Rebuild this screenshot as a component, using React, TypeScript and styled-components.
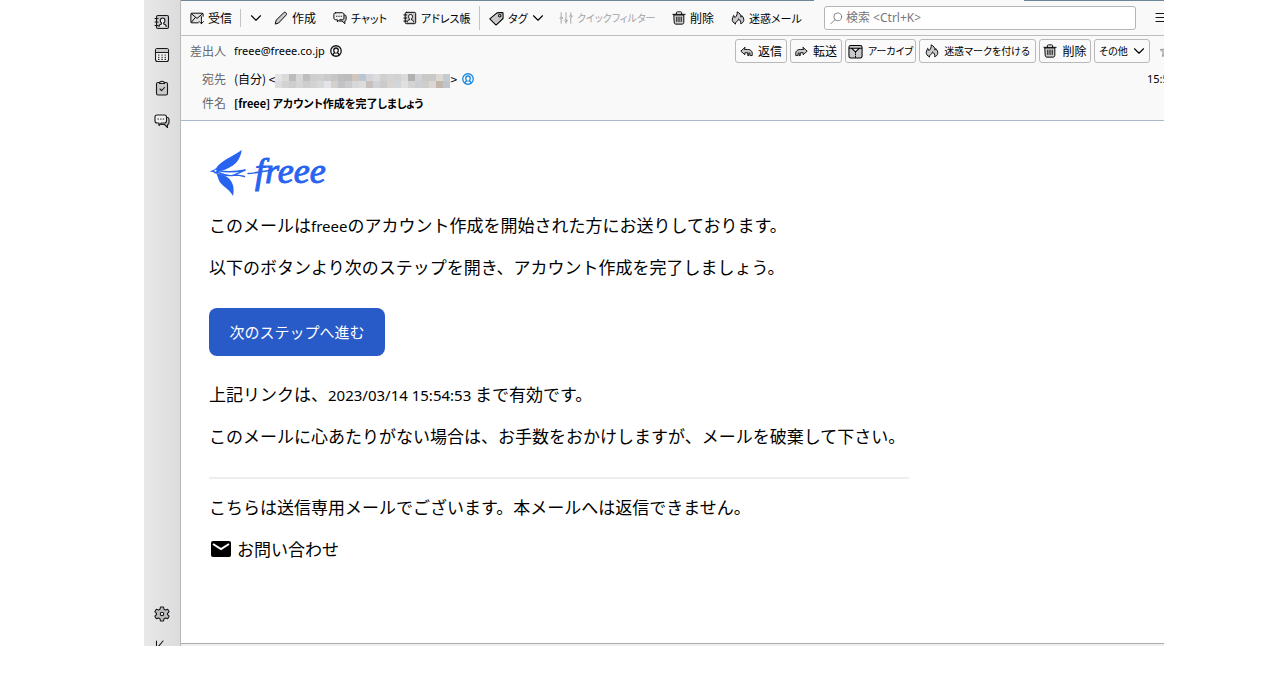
import React from 'react';
import styled, { createGlobalStyle } from 'styled-components';

const Global = createGlobalStyle`
  *, *::before, *::after { box-sizing: border-box; }
  body { margin: 0; background: #fff; color: #000; font-family: "Noto Sans CJK JP", sans-serif; }
  button, input { font: inherit; color: inherit; }
  svg { display: block; flex: none; }
`;

const Page = styled.div`
  height: 100vh;
  padding: 0 116px 35px 144px;
`;

const MailWindow = styled.div`
  display: flex;
  height: 100%;
  overflow: hidden;
`;

const Spaces = styled.nav`
  flex: none;
  width: 37px;
  padding: 14px 0 0;
  display: flex;
  flex-direction: column;
  align-items: center;
  gap: 17px;
  overflow: hidden;
  background: linear-gradient(to right, #e8e8e8, #dcdcdc);
  border-right: 1px solid #b8b8b8;
`;

const SpaceButton = styled.button`
  flex: none;
  width: 16px;
  height: 16px;
  padding: 0;
  border: 0;
  background: none;
  color: #18181b;
`;

const Spacer = styled.div`
  flex: 1;
`;

const LowerSpaces = styled.div`
  flex: none;
  height: 40px;
  display: flex;
  flex-direction: column;
  gap: 17px;
`;

const Main = styled.main`
  flex: 1;
  min-width: 0;
  display: flex;
  flex-direction: column;
  overflow: hidden;
`;

const TabEdge = styled.div`
  flex: none;
  display: flex;
  height: 1px;
  background: #6c8798;
`;

const ActiveTab = styled.div`
  width: 210px;
  margin-left: auto;
  margin-right: 140px;
  background: #f9f9fa;
`;

const Toolbar = styled.div`
  flex: none;
  height: 35px;
  display: flex;
  align-items: center;
  background: #f9f9fa;
  border-bottom: 1px solid #bdbdbd;
  font-size: 12px;
  line-height: 16px;
  font-feature-settings: "palt";
`;

const ToolButton = styled.button<{ $width: number }>`
  flex: none;
  width: ${p => p.$width}px;
  height: 24px;
  padding: 0 0 0 9px;
  display: flex;
  align-items: center;
  gap: 4px;
  border: 0;
  background: none;
  white-space: nowrap;
  color: #000;
  &:disabled { color: #a3a3a6; }
`;

const Divider = styled.span<{ $tall?: boolean }>`
  flex: none;
  width: 1px;
  height: ${p => (p.$tall ? 24 : 18)}px;
  background: #c4c4c6;
`;

const Kana = styled.span<{ $small?: boolean }>`
  font-size: ${p => (p.$small ? 10 : 11)}px;
`;

const SearchBox = styled.label`
  flex: 1;
  min-width: 0;
  height: 24px;
  margin: 0 19px 0 14px;
  padding: 0 5px;
  display: flex;
  align-items: center;
  gap: 3px;
  background: #fff;
  border: 1px solid #b4b4b8;
  border-radius: 3px;
  color: #77777c;
`;

const SearchInput = styled.input`
  flex: 1;
  min-width: 0;
  padding: 0;
  border: 0;
  outline: 0;
  background: none;
  font-family: "Noto Sans", "Noto Sans CJK JP", sans-serif;
  font-size: 12px;
  &::placeholder { color: #77777c; opacity: 1; }
`;

const EdgeButton = styled.button<{ $width: number }>`
  flex: none;
  width: ${p => p.$width}px;
  height: 16px;
  padding: 0;
  border: 0;
  background: none;
  color: #18181b;
  overflow: hidden;
`;

const MessageHeader = styled.header`
  flex: none;
  padding-bottom: 5px;
  background: #f9f9fa;
  border-bottom: 1px solid #a9b9cb;
  font-size: 12px;
  line-height: 16px;
  font-feature-settings: "palt";
`;

const HeaderRow = styled.div<{ $first?: boolean }>`
  height: ${p => (p.$first ? 30 : 24)}px;
  margin-bottom: ${p => (p.$first ? 1 : 0)}px;
  display: flex;
  align-items: center;
  white-space: nowrap;
`;

const FieldName = styled.span`
  flex: none;
  width: 45px;
  margin-right: 8px;
  text-align: right;
  color: #66666b;
`;

const FieldValue = styled.span`
  display: flex;
  align-items: center;
  gap: 5px;
`;

const Latin = styled.span`
  font-family: "Noto Sans", sans-serif;
  font-size: 11px;
`;

const Subject = styled.h1`
  margin: 0;
  font-size: 11px;
  line-height: 16px;
  font-weight: 700;
`;

const Recipient = styled.span`
  display: flex;
  align-items: center;
`;

const Redacted = styled.span`
  display: grid;
  grid-template-columns: repeat(25, 7px);
  grid-auto-rows: 7px;
  margin-top: 3px;
`;

const Block = styled.i<{ $tone: string }>`
  background: ${p => p.$tone};
`;

const Actions = styled.div`
  margin-left: auto;
  display: flex;
  align-items: center;
  gap: 3px;
`;

const ActionButton = styled.button<{ $width: number }>`
  flex: none;
  width: ${p => p.$width}px;
  height: 24px;
  padding: 0;
  display: flex;
  align-items: center;
  justify-content: center;
  gap: 5px;
  border: 1px solid #b9b9bc;
  border-radius: 3px;
  background: #fafafa;
  white-space: nowrap;
`;

const StarSlot = styled.div`
  display: flex;
  margin-left: 6px;
`;

const Time = styled.time`
  width: 17px;
  margin-left: auto;
  overflow: hidden;
  font-family: "Noto Sans", sans-serif;
  font-size: 11px;
`;

const Message = styled.article`
  flex: 1;
  min-height: 0;
  padding: 28px;
  overflow: hidden;
  background: #fff;
  font-size: 17px;
  line-height: 26px;
`;

const Logo = styled.div`
  display: flex;
  height: 48px;
  margin-bottom: 15px;
  color: #2864f0;
`;

const Wordmark = styled.span`
  margin-left: -18px;
  font-family: "Liberation Serif", serif;
  font-style: italic;
  font-size: 36px;
  line-height: 44px;
  -webkit-text-stroke: 1px currentColor;
`;

const Paragraph = styled.p`
  margin: 0 0 16px;
`;

const Text = styled.span`
  font-family: "Noto Sans", sans-serif;
  font-size: 15px;
  line-height: 16px;
`;

const NextStep = styled.a`
  display: flex;
  align-items: center;
  justify-content: center;
  width: 176px;
  height: 48px;
  margin: 28px 0 25px;
  border-radius: 8px;
  background: #285ac8;
  color: #fff;
  font-size: 15px;
  text-decoration: none;
`;

const Rule = styled.hr`
  max-width: 700px;
  height: 2px;
  margin: 28px 0 15px;
  border: 0;
  background: #eeeeee;
`;

const Contact = styled.a`
  display: flex;
  align-items: center;
  gap: 4px;
  color: inherit;
  text-decoration: none;
`;

const StatusEdge = styled.footer`
  flex: none;
  height: 3px;
  border-top: 1px solid #ababab;
  background: #f0f0f0;
`;

type IconProps = { size?: number; children: React.ReactNode };
const Icon = ({ size = 14, children }: IconProps) => (
  <svg width={size} height={size} viewBox="0 0 16 16" fill="none" stroke="currentColor"
    strokeWidth="1.1" strokeLinecap="round" strokeLinejoin="round" aria-hidden="true">{children}</svg>
);

const fill = '#c9c9cb';
const AddressIcon = ({ size }: { size?: number }) => (
  <Icon size={size}>
    <rect x="2.5" y="1.5" width="12" height="13" rx="1.5" fill={fill} />
    <path d="M1 4.5h3M1 8h3M1 11.5h3M5 12.5c0-1.600 1-2.200 2.500-2.500v-1c-1-.8-1.200-1.800-1.200-2.600C6.300 4.800 7.200 4 8.600 4s2.300.8 2.300 2.400c0 .8-.3 1.800-1.200 2.600v1c1.500.3 2.500.9 2.500 2.500" fill="#ededee" />
  </Icon>
);
const CalendarIcon = () => (
  <Icon size={16}>
    <rect x="1.5" y="1.5" width="13" height="13" rx="2" fill="#efefef" />
    <path d="M2 5.500V3.500c0-1 .5-1.500 1.500-1.500h9c1 0 1.500.5 1.500 1.500v2z" fill={fill} stroke="none" />
    <path d="M2 5.500h12M4.500 8h.5M7.800 8h.5M11 8h.5M4.500 10.200h.5M7.800 10.200h.5M11 10.200h.5M4.500 12.400h.5M7.800 12.400h.5M11 12.400h.5" />
  </Icon>
);
const TaskIcon = () => (
  <Icon size={16}>
    <rect x="2.500" y="2.500" width="11" height="12.500" rx="1.500" fill={fill} />
    <path d="M5.500 3.500c0-3 5-3 5 0z" fill="#eee" />
    <path d="M6 9l1.600 1.700L10.500 7.500" />
  </Icon>
);
const ChatIcon = ({ size }: { size?: number }) => (
  <Icon size={size}>
    <path d="M12 4.500h1c1.200 0 2 .8 2 2v3c0 1.200-.8 2-1.500 2v3l-3-3H7.500" fill={fill} />
    <path d="M3 2h7.500c1.200 0 2 .8 2 2v4c0 1.200-.8 2-2 2H7.500l-2.500 2.500V10H3c-1.200 0-2-.8-2-2V4c0-1.200.8-2 2-2z" fill="#f0f0f0" />
    <path d="M4 6h.5M6.600 6h.5M9.200 6h.5" />
  </Icon>
);
const GearIcon = () => (
  <Icon size={16}>
    <path d="M6.500 1h3l.5 2.200 1.500.9 2.200-.8 1.400 2.500L13.500 7.300v1.400l1.600 1.500-1.400 2.500-2.200-.8-1.500.9-.5 2.200h-3L6 12.800l-1.500-.9-2.200.8-1.400-2.500 1.600-1.500V7.300L.9 5.800l1.400-2.500 2.200.8L6 3.200z" fill="#bcbcbe" />
    <circle cx="8" cy="8" r="1.700" fill="#eee" />
  </Icon>
);
const CollapseIcon = () => <Icon size={16}><path d="M2.500 2v12M9 2L4 8l5 6" /></Icon>;
const InboxIcon = () => (
  <Icon>
    <path d="M9.500 13.500H2c-.6 0-1-.4-1-1v-9c0-.6.4-1 1-1h12c.6 0 1 .4 1 1V6" fill="#e4e4e6" />
    <path d="M1.500 3L8 8.500 14.500 3M1.500 13L6 7.500M13 6.500v8M10.500 12L13 14.500l2.500-2.500" />
  </Icon>
);
const PencilIcon = () => (
  <Icon><path d="M1.500 14.500l1-4L11 2c1-1 2.200-.6 2.700 0 .7.700.9 1.900 0 2.800L5.500 13.500z" fill={fill} /></Icon>
);
const TagIcon = () => (
  <Icon size={15}>
    <path d="M8.500 2L14 1.500c.7 0 1 .4 1 1V8l-7.500 7L.8 8.500z" fill={fill} />
    <circle cx="11.500" cy="5" r="1.300" fill="#fff" />
  </Icon>
);
const FilterIcon = () => (
  <Icon><path d="M2.500 2v4M2.500 10v4M8 2v7M8 13v1M13.500 2v2M13.500 8v6" /><circle cx="2.500" cy="8" r="1.300" /><circle cx="8" cy="11" r="1.300" /><circle cx="13.500" cy="6" r="1.300" /></Icon>
);
const TrashIcon = () => (
  <Icon>
    <path d="M2.500 4.500h11v8.500c0 1.200-.8 2-2 2h-7c-1.200 0-2-.8-2-2z" fill={fill} />
    <path d="M1 3.800h14M5 3.500V2c0-.6.400-1 1-1h4c.6 0 1 .4 1 1v1.500M5.500 7v5M8 7v5M10.500 7v5" />
  </Icon>
);
const FireIcon = () => (
  <Icon>
    <path d="M5 14.500C2.500 13.500 1 11.500 1.500 9 1.800 7.500 2.700 6.500 3 5c1 .6 1.400 1.400 1.500 2.500C6.500 6 7.500 3.500 7 1c3 1.200 4.500 3.500 4.300 6 .6-.4.900-1.100 1-1.800C14 7 15 9 14.500 11c-.4 1.800-1.700 3-3.500 3.500.7-2-.3-4-2.500-5.500 0 1.500-.5 2-1.500 2.600-1.200.8-1.800 1.600-2 2.900z" fill={fill} />
  </Icon>
);
const ReplyIcon = ({ flip }: { flip?: boolean }) => (
  <Icon size={13}>
    <path transform={flip ? 'matrix(-1 0 0 1 16 0)' : undefined}
      d="M6 3L1 7.500 6 12V9.500h3.500V13h1.500V9.500c1 0 1.300.8 1.500 3.500H15c.7-4.500-1-7.500-5.500-7.500H6z" fill={fill} />
  </Icon>
);
const ArchiveIcon = () => (
  <Icon size={15}>
    <rect x="1" y="1.500" width="14" height="13.500" rx="2" fill={fill} />
    <path d="M1.500 4.500h13L8 8.500z" fill="#f0f0f0" stroke="none" />
    <path d="M1.500 4.500h13M4 4.800l4 3.500 4-3.500M8 8.500v1M8 11v.5M8 13v1" />
  </Icon>
);
const Chevron = () => <Icon size={12}><path d="M2 5l6 6 6-6" strokeWidth="1.500" /></Icon>;
const SearchIcon = () => <Icon size={13}><circle cx="9.500" cy="6" r="4.800" /><path d="M6 9.500L1 14.500" /></Icon>;
const PersonIcon = ({ color }: { color: string }) => (
  <svg width="12" height="12" viewBox="0 0 16 16" fill="none" stroke={color} strokeWidth="1.700" aria-hidden="true">
    <circle cx="8" cy="8" r="7" />
    <path d="M4 13.500c0-2 1-2.800 2.500-3-1-.8-1.500-1.900-1.500-3.200C5 5.200 6.200 4 8 4s3 1.200 3 3.300c0 1.300-.5 2.400-1.500 3.200 1.500.2 2.500 1 2.500 3" />
  </svg>
);

const tones = [
  '#e4e4e5', '#dadadb', '#bcbcbd', '#d6d6d7', '#bebec0', '#cecece', '#d0d0d0', '#cbcbcc', '#c6c6c6', '#bfbebe', '#bdbcbc', '#cfc6c0', '#b9c6d6',
  '#d3d5d8', '#dcdcdc', '#d0d0d0', '#d4d4d4', '#d2d2d2', '#dadada', '#b3b0b0', '#d0d2d6', '#c8c8c6', '#c9c9c8', '#dcd9d3', '#c6cbd2',
  '#dcdcdd', '#d2d2d3', '#cdcdce', '#d5d5d6', '#cdcdcf', '#d2d2d3', '#d8d8d9', '#e4e4e6', '#d3cfcc', '#c0c2c6', '#cbcbcd', '#d6d7d9', '#dcdcdd',
  '#c6c0be', '#d0d2d6', '#cbcbcc', '#d8d4d0', '#d2d6da', '#e0e0e0', '#d4d4d5', '#ccced1', '#cdcdcc', '#dbd6cf', '#c3b7ab', '#c0c4cc',
];

export default function App() {
  return (
    <Page>
      <Global />
      <MailWindow>
        <Spaces aria-label="スペース">
          <SpaceButton aria-label="アドレス帳"><AddressIcon size={16} /></SpaceButton>
          <SpaceButton aria-label="カレンダー"><CalendarIcon /></SpaceButton>
          <SpaceButton aria-label="ToDo"><TaskIcon /></SpaceButton>
          <SpaceButton aria-label="チャット"><ChatIcon size={16} /></SpaceButton>
          <Spacer />
          <LowerSpaces>
            <SpaceButton aria-label="設定"><GearIcon /></SpaceButton>
            <SpaceButton aria-label="折りたたむ"><CollapseIcon /></SpaceButton>
          </LowerSpaces>
        </Spaces>
        <Main>
          <TabEdge><ActiveTab /></TabEdge>
          <Toolbar role="toolbar">
            <ToolButton $width={59}><InboxIcon />受信</ToolButton>
            <Divider />
            <ToolButton $width={24} aria-label="受信メニュー"><Chevron /></ToolButton>
            <ToolButton $width={59}><PencilIcon />作成</ToolButton>
            <ToolButton $width={70}><ChatIcon /><Kana>チャット</Kana></ToolButton>
            <ToolButton $width={85}><AddressIcon /><Kana>アドレス帳</Kana></ToolButton>
            <Divider $tall />
            <ToolButton $width={70}><TagIcon /><Kana>タグ</Kana><Chevron /></ToolButton>
            <ToolButton $width={113} disabled><FilterIcon /><Kana $small>クイックフィルター</Kana></ToolButton>
            <ToolButton $width={59}><TrashIcon />削除</ToolButton>
            <ToolButton $width={88}><FireIcon /><Kana>迷惑メール</Kana></ToolButton>
            <SearchBox><SearchIcon /><SearchInput type="search" aria-label="検索" placeholder="検索 <Ctrl+K>" /></SearchBox>
            <EdgeButton $width={9} aria-label="メニュー"><Icon size={16}><path d="M1 3.500h14M1 7.500h14M1 11.500h14" /></Icon></EdgeButton>
          </Toolbar>
          <MessageHeader>
            <HeaderRow $first>
              <FieldName>差出人</FieldName>
              <FieldValue><Latin>freee@freee.co.jp</Latin><PersonIcon color="#111" /></FieldValue>
              <Actions>
                <ActionButton $width={52}><ReplyIcon />返信</ActionButton>
                <ActionButton $width={52}><ReplyIcon flip />転送</ActionButton>
                <ActionButton $width={71}><ArchiveIcon /><Kana $small>アーカイブ</Kana></ActionButton>
                <ActionButton $width={117}><FireIcon /><Kana $small>迷惑マークを付ける</Kana></ActionButton>
                <ActionButton $width={52}><TrashIcon />削除</ActionButton>
                <ActionButton $width={56}><Kana $small>その他</Kana><Chevron /></ActionButton>
                <StarSlot>
                  <EdgeButton $width={5} aria-label="スター"><Icon><path d="M8 1.500l2 4.300 4.700.6-3.500 3.200.9 4.700L8 12l-4.100 2.300.9-4.700L1.300 6.400 6 5.800z" fill={fill} stroke="#98989c" /></Icon></EdgeButton>
                </StarSlot>
              </Actions>
            </HeaderRow>
            <HeaderRow>
              <FieldName>宛先</FieldName>
              <FieldValue>
                <Recipient>(自分) &lt;
                  <Redacted>{tones.map((t, i) => <Block key={i} $tone={t} />)}</Redacted>
                  &gt;
                </Recipient>
                <PersonIcon color="#1787e0" />
              </FieldValue>
              <Time>15:5</Time>
            </HeaderRow>
            <HeaderRow>
              <FieldName>件名</FieldName>
              <Subject>[freee] アカウント作成を完了しましょう</Subject>
            </HeaderRow>
          </MessageHeader>
          <Message>
            <Logo>
              <svg width="64" height="48" viewBox="0 0 64 48" fill="currentColor" aria-hidden="true">
                <path d="M7 19.500C11 12 23 8 32.700 1c-.7 6-3.700 12-8.700 15.500-3 2-6 3-8.700 4.500L9 22.500z" />
                <path d="M7 24c2 3 2 7 5 10.500C16 39 21 41 24 47c1.500-7 .5-13-4-17.500-2-2-4-3-7-4z" />
                <path d="M.5 22.200l4.500-1.500c1-1.500 4-1.800 5 .3.500 1.600-.5 3.500-2.500 3.500-1.500 0-2.300-.5-3-1.300z" />
                <circle cx="6.500" cy="21.800" r="1" fill="#fff" />
                <path d="M9 21.500c8 2 18 1.500 27.500-.5-5 1.500-8 4.500-13 5.500-5 .5-9-.5-14-3M25 26c4 0 7 .5 10.500 1.500M39 24.500c7 0 11-2 22-3" fill="none" stroke="currentColor" strokeWidth="1.400" strokeLinecap="round" />
              </svg>
              <Wordmark>freee</Wordmark>
            </Logo>
            <Paragraph>このメールは<Text>freee</Text>のアカウント作成を開始された方にお送りしております。</Paragraph>
            <Paragraph>以下のボタンより次のステップを開き、アカウント作成を完了しましょう。</Paragraph>
            <NextStep href="#next">次のステップへ進む</NextStep>
            <Paragraph>上記リンクは、<Text>2023/03/14 15:54:53</Text> まで有効です。</Paragraph>
            <Paragraph>このメールに心あたりがない場合は、お手数をおかけしますが、メールを破棄して下さい。</Paragraph>
            <Rule />
            <Paragraph>こちらは送信専用メールでございます。本メールへは返信できません。</Paragraph>
            <Contact href="#contact">
              <svg width="24" height="24" viewBox="0 0 24 24" aria-hidden="true">
                <rect x="2" y="4" width="20" height="16" rx="2" fill="#000" />
                <path d="M4 7l8 5 8-5" fill="none" stroke="#fff" strokeWidth="2" />
              </svg>
              お問い合わせ
            </Contact>
          </Message>
          <StatusEdge />
        </Main>
      </MailWindow>
    </Page>
  );
}
